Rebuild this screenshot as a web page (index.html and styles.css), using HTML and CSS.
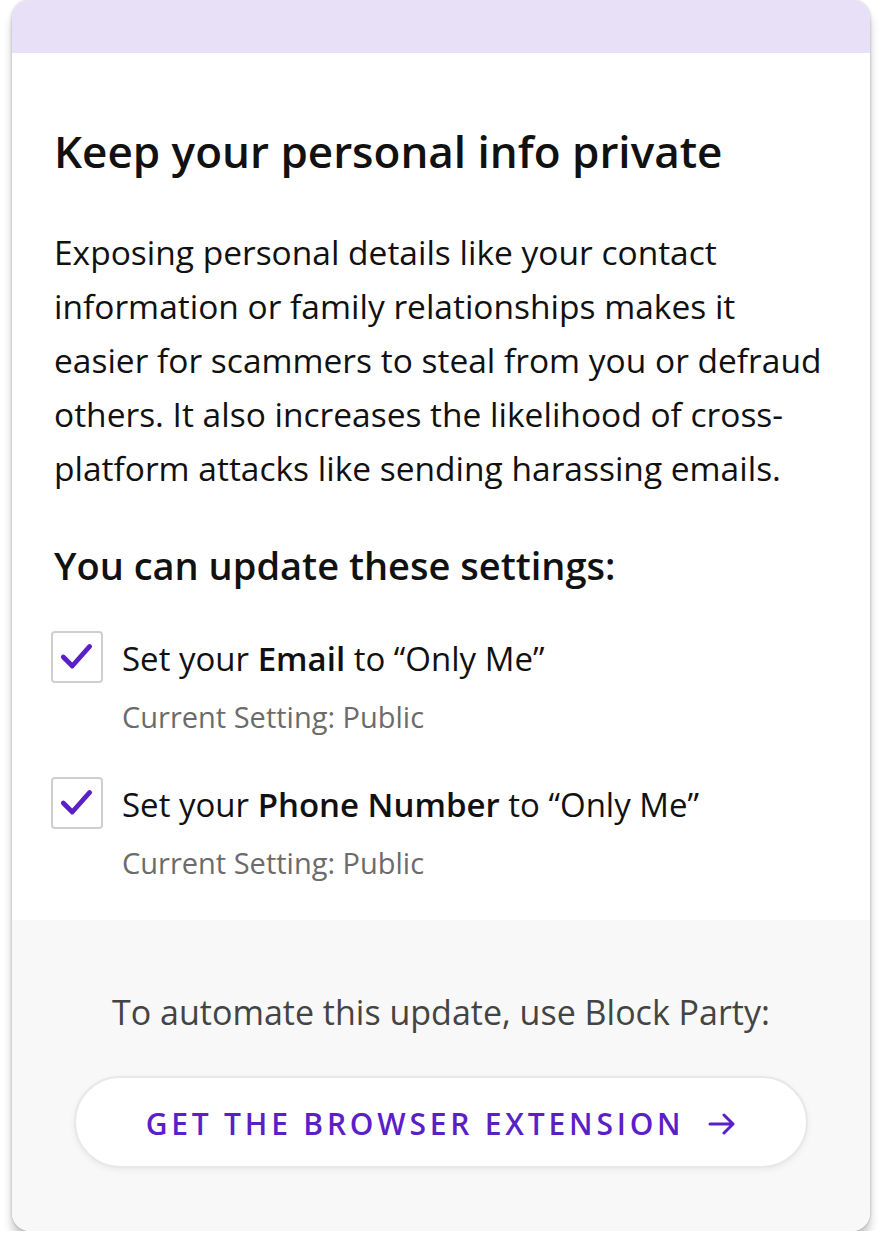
FILE: index.html
```html
<!DOCTYPE html>
<html>
<head>
    <title>Keep your personal info private</title>
    <link rel="stylesheet" href="styles.css">
</head>
<body>
    <div class="card">
        <!-- purple strip at the top of the card -->
        <div class="card-band"></div>

        <div class="card-body">
            <h1 class="card-title">Keep your personal info private</h1>
            <p class="card-text">Exposing personal details like your contact information or family relationships makes it easier for scammers to steal from you or defraud others. It also increases the likelihood of cross-platform attacks like sending harassing emails.</p>

            <h2 class="settings-title">You can update these settings:</h2>

            <div class="setting">
                <span class="check">
                    <svg width="38" height="38" viewBox="0 0 36 36"><path d="M5 18 L13.5 26.5 L30 8" fill="none" stroke="#5b1fc8" stroke-width="4.5" stroke-linecap="round" stroke-linejoin="round"/></svg>
                </span>
                <div class="setting-info">
                    <div class="setting-label">Set your <b>Email</b> to “Only Me”</div>
                    <div class="setting-current">Current Setting: Public</div>
                </div>
            </div>

            <div class="setting">
                <span class="check">
                    <svg width="38" height="38" viewBox="0 0 36 36"><path d="M5 18 L13.5 26.5 L30 8" fill="none" stroke="#5b1fc8" stroke-width="4.5" stroke-linecap="round" stroke-linejoin="round"/></svg>
                </span>
                <div class="setting-info">
                    <div class="setting-label">Set your <b>Phone Number</b> to “Only Me”</div>
                    <div class="setting-current">Current Setting: Public</div>
                </div>
            </div>
        </div>

        <!-- grey footer with the call to action -->
        <div class="card-footer">
            <p class="footer-text">To automate this update, use Block Party:</p>
            <button class="extension-button">
                GET THE BROWSER EXTENSION
                <svg class="arrow" width="28" height="22" viewBox="0 0 28 22"><path d="M2 11 H25 M16 2 L25 11 L16 20" fill="none" stroke="#5b1fc8" stroke-width="3" stroke-linecap="round" stroke-linejoin="round"/></svg>
            </button>
        </div>
    </div>
</body>
</html>
```

FILE: styles.css
```css
body {
    margin: 0;
    background: #ffffff;
    font-family: "Open Sans", "Noto Sans", sans-serif;
    color: #111111;
}

.card {
    width: 858px;
    margin-left: 12px;
    border-radius: 18px;
    overflow: hidden;
    background: #ffffff;
    box-shadow: 0 0 3px rgba(0, 0, 0, 0.25), 0 9px 10px rgba(0, 0, 0, 0.22);
}

.card-band {
    height: 53px;
    background: #e7e0f6;
}

.card-body {
    padding: 70px 40px 27px 42px;
}

.card-title {
    margin: 0;
    font-size: 44px;
    font-weight: 600;
    line-height: 56px;
}

.card-text {
    margin: 46px 0 0 0;
    font-size: 33.5px;
    line-height: 54px;
}

.settings-title {
    margin: 46px 0 42px 0;
    font-size: 38px;
    font-weight: 600;
    line-height: 48px;
}

.setting {
    display: flex;
    gap: 19px;
    margin-bottom: 30px;
}

.setting:last-child {
    margin-bottom: 0;
}

.check {
    width: 48px;
    height: 48px;
    flex-shrink: 0;
    border: 2px solid #cfcfcf;
    border-radius: 4px;
    display: flex;
    align-items: center;
    justify-content: center;
    margin-left: -3px;
}

.setting-label {
    font-size: 33px;
    line-height: 56px;
}

.setting-label b {
    font-weight: 600;
}

.setting-current {
    font-size: 29px;
    line-height: 60px;
    color: #6b6b6b;
}

.card-footer {
    background: #f8f8f8;
    padding: 68px 62px 63px 62px;
    text-align: center;
}

.footer-text {
    margin: 0 0 40px 0;
    font-size: 34px;
    line-height: 48px;
    color: #444444;
}

.extension-button {
    width: 100%;
    height: 92px;
    box-sizing: border-box;
    border: 2px solid #e8e8e8;
    border-radius: 46px;
    background: #ffffff;
    color: #5b1fc8;
    font-family: inherit;
    font-size: 30px;
    font-weight: 600;
    letter-spacing: 3.8px;
    padding-top: 4px;
    box-shadow: 0 2px 6px rgba(0, 0, 0, 0.06);
    display: flex;
    align-items: center;
    justify-content: center;
}

.arrow {
    margin-left: 24px;
}
```
